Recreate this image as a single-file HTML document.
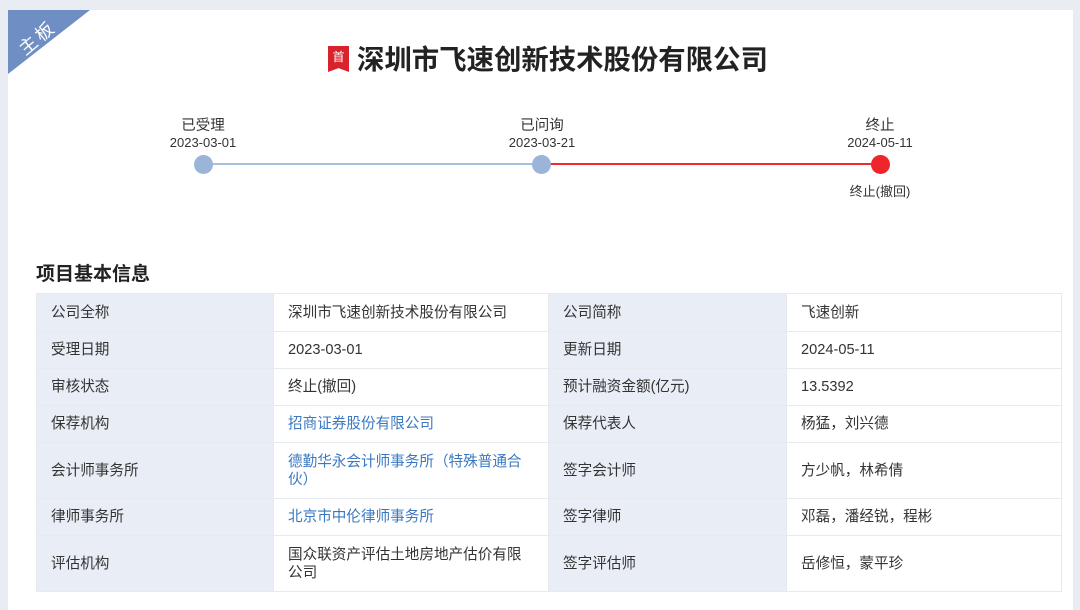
<!DOCTYPE html>
<html><head><meta charset="utf-8"><style>
*{margin:0;padding:0;box-sizing:border-box}
body{width:1080px;height:605px;background:#e9ecf3;font-family:"Liberation Sans","Noto Sans CJK SC",sans-serif;color:#333;position:relative;overflow:hidden}
.card{position:absolute;left:8px;top:10px;width:1065px;height:600px;background:#fff;overflow:hidden}
.rib{position:absolute;left:0;top:0;width:0;height:0;border-top:64px solid #6f8fc4;border-right:82px solid transparent}
.ribt{position:absolute;left:8px;top:14px;color:#fff;font-size:18px;transform:rotate(-40deg);letter-spacing:3px}
.title{position:absolute;left:349px;top:27px;font-size:27.4px;font-weight:bold;color:#222;letter-spacing:0}
.ic{position:absolute;left:320px;top:36px;width:21px;height:26px;background:#d9232c;color:#fff;font-size:12px;text-align:center;line-height:22px;clip-path:polygon(0 0,100% 0,100% 100%,50% 85%,0 100%)}
.t{position:absolute;font-size:14.5px;color:#333;text-align:center;width:120px}
.d{position:absolute;font-size:13px;color:#333;text-align:center;width:120px}
.dot{position:absolute;width:19px;height:19px;border-radius:50%;top:145px}
h2{position:absolute;left:28px;top:249px;font-size:19px;font-weight:bold;color:#222}
table{position:absolute;left:28px;top:283px;border-collapse:collapse;font-size:14.6px;color:#333;table-layout:fixed}
td{border:1px solid #e6e9ee;padding:0 14px;vertical-align:middle;line-height:18px}
td.l{background:#e9eef6}
a{color:#3a78c2;text-decoration:none}
</style></head><body>
<div class="card">
<div class="rib"></div><div class="ribt">主板</div>
<div class="ic">首</div>
<div class="title">深圳市飞速创新技术股份有限公司</div>
<div class="t" style="left:135px;top:104px">已受理</div>
<div class="d" style="left:135px;top:125px">2023-03-01</div>
<div class="t" style="left:474px;top:104px">已问询</div>
<div class="d" style="left:474px;top:125px">2023-03-21</div>
<div class="t" style="left:812px;top:104px">终止</div>
<div class="d" style="left:812px;top:125px">2024-05-11</div>
<div class="d" style="left:812px;top:171px">终止(撤回)</div>
<div style="position:absolute;left:195px;top:153px;width:339px;height:2px;background:#a6bfe0"></div>
<div style="position:absolute;left:534px;top:153px;width:338px;height:2px;background:#ee2a2f"></div>
<div class="dot" style="left:186px;background:#9ab5d8"></div>
<div class="dot" style="left:524px;background:#9ab5d8"></div>
<div class="dot" style="left:863px;background:#f0252c"></div>
<h2>项目基本信息</h2>
<table>
<colgroup><col style="width:237px"><col style="width:275px"><col style="width:238px"><col style="width:275px"></colgroup>
<tr style="height:38px"><td class="l">公司全称</td><td>深圳市飞速创新技术股份有限公司</td><td class="l">公司简称</td><td>飞速创新</td></tr>
<tr style="height:37px"><td class="l">受理日期</td><td>2023-03-01</td><td class="l">更新日期</td><td>2024-05-11</td></tr>
<tr style="height:37px"><td class="l">审核状态</td><td>终止(撤回)</td><td class="l">预计融资金额(亿元)</td><td>13.5392</td></tr>
<tr style="height:37px"><td class="l">保荐机构</td><td><a>招商证券股份有限公司</a></td><td class="l">保荐代表人</td><td>杨猛，刘兴德</td></tr>
<tr style="height:56px"><td class="l">会计师事务所</td><td style="padding-right:22px"><a>德勤华永会计师事务所（特殊普通合伙）</a></td><td class="l">签字会计师</td><td>方少帆，林希倩</td></tr>
<tr style="height:37px"><td class="l">律师事务所</td><td><a>北京市中伦律师事务所</a></td><td class="l">签字律师</td><td>邓磊，潘经锐，程彬</td></tr>
<tr style="height:56px"><td class="l">评估机构</td><td style="padding-right:22px">国众联资产评估土地房地产估价有限公司</td><td class="l">签字评估师</td><td>岳修恒，蒙平珍</td></tr>
</table>
</div>
</body></html>
